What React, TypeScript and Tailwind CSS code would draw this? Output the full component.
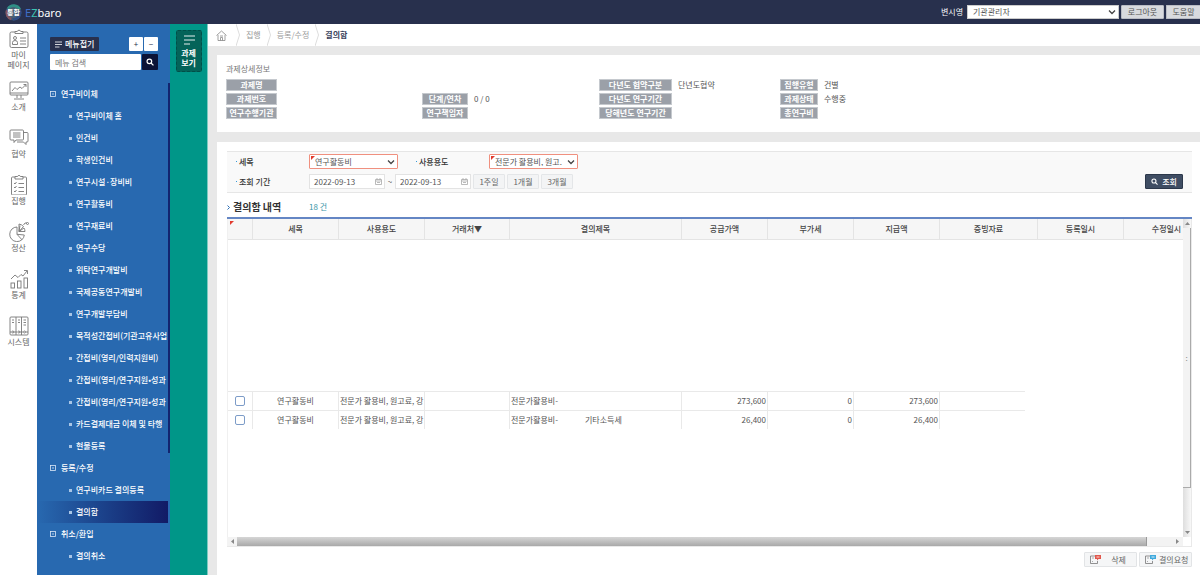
import { useState } from 'react'
import type { ReactNode } from 'react'
import clsx from 'clsx'

interface RailItem {
  lines: string[]
  icon: ReactNode
}

const railItems: RailItem[] = [
  {
    lines: ['마이', '페이지'],
    icon: (
      <>
        <rect x="1" y="3" width="18" height="15.5" rx="1.5" />
        <path d="M6 4.5v-2h2.2a1.9 1.9 0 0 1 3.6 0H14v2z" fill="#fff" />
        <circle cx="6" cy="9" r="1.5" />
        <path d="M3.5 15.5v-2a2.5 2 0 0 1 5 0v2zM11 9h6M11 12h6M11 15h6" />
      </>
    ),
  },
  {
    lines: ['소개'],
    icon: (
      <>
        <rect x="1" y="1" width="18" height="13" rx="1" />
        <path d="M1 12h18M3 10l3-3.500 2 2 3-2.500 2 1.500 4-4M14.500 3.500H17V6M8 14v3M12 14v3M5 18h10" />
      </>
    ),
  },
  {
    lines: ['협약'],
    icon: (
      <>
        <path d="M2 2h11.500a1 1 0 0 1 1 1v8a1 1 0 0 1-1 1H7l-2 2.500V12H2a1 1 0 0 1-1-1V3a1 1 0 0 1 1-1z" />
        <path d="M14.500 4.500H18a1 1 0 0 1 1 1V13a1 1 0 0 1-1 1h-1v2.500L14.500 14H8M4 5h7.500M4 7h7.500M4 9h7.500" />
      </>
    ),
  },
  {
    lines: ['집행'],
    icon: (
      <>
        <rect x="2.500" y="2" width="15" height="18" rx="1" />
        <path d="M6 4V1.500h2.500a1.600 1.600 0 0 1 3 0H14V4z" fill="#fff" />
        <path d="m5 8 1 1 1.500-2M9.500 8.500H15M5 12l1 1 1.500-2M9.500 12.500H15M5 16l1 1 1.500-2M9.500 16.500H15" />
      </>
    ),
  },
  {
    lines: ['정산'],
    icon: (
      <>
        <path d="M8 5a7.300 7.300 0 1 0 7.300 8L8 12.300z" />
        <path d="m8 12.300 5 5.500M10 9.500V2a7.500 7.500 0 0 1 4.500 2.500zM10 9.500 15 6a7 7 0 0 1 1 3.500zM14.500 3 16 1h2M11 3.500l-1 6" />
        <circle cx="18.500" cy="1.500" r="1" />
      </>
    ),
  },
  {
    lines: ['통계'],
    icon: (
      <>
        <rect x="2" y="14" width="3.500" height="5" />
        <rect x="8.500" y="12" width="3.500" height="7" />
        <rect x="15" y="9" width="3.500" height="10" />
        <path d="m2 10 4-4 3 2.500 3-3 2 1.500 4-5M15 1.500h3.500V5" />
      </>
    ),
  },
  {
    lines: ['시스템'],
    icon: (
      <>
        <rect x="1" y="1" width="18" height="18" rx="1" />
        <path d="M7 1v18M12.500 1v18M3 4h2M3 6.500h2M9 4h2M9 6.500h2M14.500 4H17M14.500 6.500H17M14.500 9H17M1 16h1.500M4.500 16H8M10.500 16H14M16.500 16H19" />
        <circle cx="3.800" cy="16" r="1" />
        <circle cx="9.800" cy="16" r="1" />
        <circle cx="15.500" cy="16" r="1" />
      </>
    ),
  },
]

const menuGroups = [
  {
    title: '연구비이체',
    items: [
      '연구비이체 홈',
      '인건비',
      '학생인건비',
      '연구시설·장비비',
      '연구활동비',
      '연구재료비',
      '연구수당',
      '위탁연구개발비',
      '국제공동연구개발비',
      '연구개발부담비',
      '목적성간접비(기관고유사업',
      '간접비(영리/인력지원비)',
      '간접비(영리/연구지원•성과',
      '간접비(영리/연구지원•성과',
      '카드결제대금 이체 및 타행',
      '현물등록',
    ],
  },
  { title: '등록/수정', items: ['연구비카드 결의등록', '결의함'] },
  { title: '취소/환입', items: ['결의취소'] },
]

const details = [
  { width: 'w-[51px]', rows: [['과제명', ''], ['과제번호', ''], ['연구수행기관', '']] },
  { width: 'w-[46px]', rows: [null, ['단계/연차', '0 / 0'], ['연구책임자', '']] },
  { width: 'w-[73px]', rows: [['다년도 협약구분', '단년도협약'], ['다년도 연구기간', ''], ['당해년도 연구기간', '']] },
  { width: 'w-[38px]', rows: [['집행유형', '건별'], ['과제상태', '수행중'], ['총연구비', '']] },
]

const columns = [
  { label: '', width: 'w-[25px]' },
  { label: '세목', width: 'w-[86px]' },
  { label: '사용용도', width: 'w-[86px]' },
  { label: '거래처▼', width: 'w-[85px]' },
  { label: '결의제목', width: 'w-[172px]' },
  { label: '공급가액', width: 'w-[86px]' },
  { label: '부가세', width: 'w-[86px]' },
  { label: '지급액', width: 'w-[86px]' },
  { label: '증빙자료', width: 'w-[98px]' },
  { label: '등록일시', width: 'w-[86px]' },
  { label: '수정일시', width: 'w-[86px]' },
]

const records = [
  { id: 1, category: '연구활동비', usage: '전문가 활용비, 원고료, 강', title: '전문가활용비-', extra: '', supply: '273,600', vat: '0', paid: '273,600' },
  { id: 2, category: '연구활동비', usage: '전문가 활용비, 원고료, 강', title: '전문가활용비-', extra: '기타소득세', supply: '26,400', vat: '0', paid: '26,400' },
]

function RequiredMark() {
  return (
    <svg className="pointer-events-none absolute left-[2px] top-[2px] size-[4px]" viewBox="0 0 4 4" aria-hidden="true">
      <path d="M0 0h4L0 4z" fill="#e23b2e" />
    </svg>
  )
}

function Chevron() {
  return (
    <svg
      className="pointer-events-none absolute right-[3px] top-1/2 size-2 -translate-y-1/2"
      viewBox="0 0 8 8"
      fill="none"
      stroke="#444"
      strokeWidth="1.3"
      aria-hidden="true"
    >
      <path d="M1 2.500 4 5.500 7 2.500" />
    </svg>
  )
}

function SearchIcon({ className }: { className: string }) {
  return (
    <svg className={className} viewBox="0 0 10 10" fill="none" stroke="currentColor" strokeWidth="1.5" aria-hidden="true">
      <circle cx="4.200" cy="4.200" r="2.900" />
      <path d="m6.300 6.300 3 3" />
    </svg>
  )
}

function TopBar() {
  return (
    <header className="flex h-6 shrink-0 items-center justify-between bg-[#28304d] pl-[5px]">
      <a href="#" className="flex items-center gap-[3px]" aria-label="통합 EZbaro">
        <span className="relative flex size-[17px] items-center justify-center">
          <svg className="absolute inset-0 size-full" viewBox="0 0 17 17" aria-hidden="true">
            <circle cx="8.500" cy="8.500" r="8" fill="#3d5670" />
            <path d="M2 4a8 8 0 0 1 14 1L8 8z" fill="#2f8f86" />
            <path d="M1 6a8 8 0 0 0 5 10.200L8 8z" fill="#84565f" />
            <path d="M16 6a8 8 0 0 1-8 10.500L9 8z" fill="#2f4c86" />
            <circle cx="8.500" cy="8.500" r="5.500" fill="#4a6075" />
          </svg>
          <span className="relative text-[7px] font-bold leading-none text-white">통합</span>
        </span>
        <span className="font-['Noto_Sans'] text-[11px] leading-none text-white">
          <span className="text-[#3f6fc8]">E</span>
          <span className="text-[#3cc4b2]">Z</span>baro
        </span>
      </a>
      <div className="flex items-center gap-[2px] text-[#555]">
        <label htmlFor="role" className="mr-[2px] text-white">변시영</label>
        <div className="relative">
          <select id="role" className="h-[14px] w-[152px] appearance-none border border-[#ccc] bg-white pl-[5px] leading-none">
            <option>기관관리자</option>
          </select>
          <Chevron />
        </div>
        <button type="button" className="h-[14px] w-[43px] rounded-[1px] border border-[#b9bcc4] bg-[#d8dade]">로그아웃</button>
        <button type="button" className="h-[14px] w-[34px] rounded-l-[1px] border border-r-0 border-[#b9bcc4] bg-[#d8dade]">도움말</button>
      </div>
    </header>
  )
}

function Rail() {
  return (
    <nav className="w-[37px] shrink-0 bg-white pt-[5px]" aria-label="주 메뉴">
      {railItems.map((item, index) => (
        <a
          key={item.lines.join('')}
          href="#"
          className={clsx('flex flex-col items-center text-center text-[#666]', index === 0 ? 'h-[52px]' : 'h-[47px]')}
        >
          <svg className="size-5" viewBox="0 0 20 20" fill="none" stroke="#777" strokeWidth="0.900" aria-hidden="true">
            {item.icon}
          </svg>
          <span className="mt-px leading-[10px]">
            {item.lines.map((line) => (
              <span key={line} className="block">{line}</span>
            ))}
          </span>
        </a>
      ))}
    </nav>
  )
}

function SideMenu({ active, onSelect }: { active: string; onSelect: (name: string) => void }) {
  return (
    <aside className="w-[133px] shrink-0 bg-[#2869b0] pt-[13px] text-white">
      <div className="flex items-center gap-px pl-[13px] pr-3">
        <button type="button" className="mr-auto flex h-[14px] items-center gap-[3px] rounded-[1px] bg-[#28304d] px-[5px] font-medium">
          <svg className="size-[7px]" viewBox="0 0 7 7" stroke="#fff" strokeWidth="0.800" aria-hidden="true">
            <path d="M0 1h7M0 3.500h7M0 6h4.500" />
          </svg>
          메뉴접기
        </button>
        <button type="button" aria-label="모두 펼치기" className="flex size-[14px] items-center justify-center rounded-[1px] bg-white text-[#28304d]">+</button>
        <button type="button" aria-label="모두 접기" className="flex size-[14px] items-center justify-center rounded-[1px] bg-white text-[#28304d]">−</button>
      </div>
      <form className="mt-[3px] flex gap-px pl-[13px] pr-3" onSubmit={(e) => e.preventDefault()}>
        <input
          type="text"
          aria-label="메뉴 검색"
          placeholder="메뉴 검색"
          className="h-4 min-w-0 flex-1 rounded-[1px] bg-white pl-[5px] text-[#333] placeholder:text-[#777]"
        />
        <button type="submit" aria-label="검색" className="flex size-4 items-center justify-center rounded-[1px] bg-[#0b1236]">
          <SearchIcon className="size-2" />
        </button>
      </form>
      <div className="relative mt-[13px] pr-[2px]">
        <div className="absolute right-0 top-0 h-[370px] w-[2px] bg-[#13246f]" />
        {menuGroups.map((group) => (
          <section key={group.title}>
            <h2 className="flex h-[22px] items-center gap-[5px] pl-[13px] font-medium">
              <svg className="size-[6px]" viewBox="0 0 6 6" fill="none" stroke="#dbe8f7" strokeWidth="0.800" aria-hidden="true">
                <rect x="0.500" y="0.500" width="5" height="5" />
                <path d="M2 3h2" />
              </svg>
              {group.title}
            </h2>
            <ul>
              {group.items.map((name, index) => (
                <li key={index}>
                  <a
                    href="#"
                    onClick={() => onSelect(name)}
                    className={clsx(
                      'flex h-[22px] items-center gap-1 overflow-hidden whitespace-nowrap pl-8 font-medium',
                      name === active && 'bg-gradient-to-r from-[#2869b0] to-[#121a66]',
                    )}
                  >
                    <span className="size-[3px] shrink-0 bg-[#a9c6e6]" />
                    {name}
                  </a>
                </li>
              ))}
            </ul>
          </section>
        ))}
      </div>
    </aside>
  )
}

function TaskStrip() {
  return (
    <div className="w-[38px] shrink-0 border-r border-[#7cc9c1] bg-[#009688] pt-[6px]">
      <button
        type="button"
        className="mx-auto flex h-[42px] w-[26px] flex-col items-center rounded-[2px] border border-dashed border-[#004f48] bg-[#046359] pt-1 font-bold leading-[10px] text-white"
      >
        <svg className="mb-[3px] h-[10px] w-3" viewBox="0 0 12 10" stroke="#fff" strokeWidth="0.900" aria-hidden="true">
          <path d="M1 1h11M1 5h11M1 9h6" />
        </svg>
        <span>과제<br />보기</span>
      </button>
    </div>
  )
}

function CrumbDivider() {
  return (
    <svg className="h-[22px] w-1" viewBox="0 0 4 22" fill="none" stroke="#ddd" aria-hidden="true">
      <path d="M0 0 3.500 11 0 22" />
    </svg>
  )
}

function Breadcrumb() {
  return (
    <nav className="flex h-[22px] items-center gap-[6px] bg-white pl-2 text-[#999]" aria-label="현재 위치">
      <a href="#" aria-label="홈" className="mr-[3px]">
        <svg className="size-[11px]" viewBox="0 0 11 11" fill="none" stroke="#888" strokeWidth="0.800" aria-hidden="true">
          <path d="M.5 5.500 5.500 1l5 4.500M2 5v5.500h7V5M4.500 10.500v-3h2v3M4 6h3" />
        </svg>
      </a>
      <CrumbDivider />
      <a href="#">집행</a>
      <CrumbDivider />
      <a href="#">등록/수정</a>
      <CrumbDivider />
      <span className="font-bold text-[#39415a]">결의함</span>
    </nav>
  )
}

function TaskDetail() {
  return (
    <section className="bg-white px-[9px] pb-[13px] pt-2">
      <h2 className="leading-3 text-[#777]">과제상세정보</h2>
      <div className="mt-1 grid grid-cols-[196fr_177fr_181fr_411fr]">
        {details.map((col, i) => (
          <dl key={i} className="flex flex-col gap-[2px]">
            {col.rows.map((row, j) => (
              <div key={j} className="flex h-3 items-center gap-[6px]">
                {row && (
                  <>
                    <dt className={clsx('h-3 border border-[#c5c9ce] bg-[#9ba0a8] text-center font-bold leading-[10px] text-white', col.width)}>
                      {row[0]}
                    </dt>
                    <dd>{row[1]}</dd>
                  </>
                )}
              </div>
            ))}
          </dl>
        ))}
      </div>
    </section>
  )
}

function FieldLabel({ htmlFor, children }: { htmlFor: string; children: ReactNode }) {
  return (
    <label htmlFor={htmlFor} className="flex w-[73px] items-center gap-[2px] font-medium text-[#333]">
      <span className="size-px bg-[#3a9bd6]" />
      {children}
    </label>
  )
}

function RequiredSelect({ id, value }: { id: string; value: string }) {
  return (
    <div className="relative">
      <select id={id} className="h-[15px] w-[89px] appearance-none rounded-[1px] border border-[#f0907f] bg-white pl-[5px] leading-none">
        <option>{value}</option>
      </select>
      <RequiredMark />
      <Chevron />
    </div>
  )
}

function DateField({ id, label }: { id: string; label?: string }) {
  return (
    <div className="relative">
      <input
        id={id}
        type="text"
        aria-label={label}
        defaultValue="2022-09-13"
        className="block h-[15px] w-[76px] border border-[#e3e3e3] bg-white pl-1"
      />
      <svg className="absolute right-[3px] top-1 size-[7px]" viewBox="0 0 7 7" fill="none" stroke="#aaa" strokeWidth="0.800" aria-hidden="true">
        <path d="M.5 1.500h6v5h-6zM.5 3h6M2 0v2M5 0v2M2 4.500h3" />
      </svg>
    </div>
  )
}

function SearchForm() {
  return (
    <form
      className="flex h-[42px] items-end justify-between border-y border-[#e6e6e6] bg-[#f9f9f9] px-[9px] pb-[3px]"
      onSubmit={(e) => e.preventDefault()}
    >
      <div className="flex flex-col gap-[5px]">
        <div className="flex items-center">
          <FieldLabel htmlFor="category">세목</FieldLabel>
          <RequiredSelect id="category" value="연구활동비" />
          <span className="w-[18px]" />
          <FieldLabel htmlFor="usage">사용용도</FieldLabel>
          <RequiredSelect id="usage" value="전문가 활용비, 원고." />
        </div>
        <div className="flex items-center">
          <FieldLabel htmlFor="from">조회 기간</FieldLabel>
          <DateField id="from" />
          <span className="w-[10px] text-center">~</span>
          <DateField id="to" label="조회 종료일" />
          <div className="ml-[2px] flex gap-[2px]">
            {['1주일', '1개월', '3개월'].map((label) => (
              <button key={label} type="button" className="h-[15px] w-8 rounded-[1px] border border-[#e4e6e8] bg-[#f3f4f5] text-[#666]">
                {label}
              </button>
            ))}
          </div>
        </div>
      </div>
      <button type="submit" className="flex h-[15px] w-[38px] items-center justify-center gap-1 rounded-[1px] border border-[#2c384b] bg-[#3f4d63] font-medium text-white">
        <SearchIcon className="size-[7px]" />
        조회
      </button>
    </form>
  )
}

function RecordTable() {
  const cell = 'h-[19px] border-r border-t border-[#e9e9e9] p-0'

  return (
    <table className="w-full min-w-[982px] table-fixed border-separate border-spacing-0">
      <thead>
        <tr>
          {columns.map((column, index) => (
            <th key={index} scope="col" className={clsx('relative h-[21px] border-b border-r border-[#e4e4e4] bg-[#f6f6f6] p-0 font-medium text-[#444]', column.width)}>
              {column.label || <RequiredMark />}
            </th>
          ))}
        </tr>
      </thead>
      <tbody>
        <tr>
          <td colSpan={11} className="h-[151px] p-0" />
        </tr>
        {records.map((record) => (
          <tr key={record.id}>
            <td className={cell}>
              <input
                type="checkbox"
                aria-label={`${record.category} ${record.paid} 선택`}
                className="mx-auto block size-[10px] appearance-none rounded-[2px] border border-[#7d9cc8] bg-white checked:bg-[#7d9cc8]"
              />
            </td>
            <td className={clsx(cell, 'text-center')}>{record.category}</td>
            <td className={clsx(cell, 'overflow-hidden whitespace-nowrap pl-px')}>{record.usage}</td>
            <td className={cell} />
            <td className={clsx(cell, 'whitespace-nowrap pl-px')}>
              {record.title}
              {record.extra && <span className="ml-[27px]">{record.extra}</span>}
            </td>
            <td className={clsx(cell, 'pr-px text-right')}>{record.supply}</td>
            <td className={clsx(cell, 'pr-px text-right')}>{record.vat}</td>
            <td className={clsx(cell, 'pr-px text-right')}>{record.paid}</td>
            <td className="h-[19px] p-0">
              <div className="h-[19px] w-[85px] border-t border-[#e9e9e9]" />
            </td>
            <td className="p-0" colSpan={2} />
          </tr>
        ))}
      </tbody>
    </table>
  )
}

function Arrow({ d }: { d: string }) {
  return (
    <svg className="size-[5px] shrink-0" viewBox="0 0 5 5" fill="#888" aria-hidden="true">
      <path d={d} />
    </svg>
  )
}

function RecordGrid() {
  return (
    <div className="flex flex-1 flex-col border-t-2 border-[#6486c4]">
      <div className="flex flex-1 border-l border-[#f0f0f0]">
        <div className="min-w-0 flex-1 overflow-hidden">
          <RecordTable />
        </div>
        <div className="flex w-[9px] shrink-0 flex-col items-center border-r border-[#e9e9e9] bg-gradient-to-r from-[#dedede] to-[#f8f8f8]">
          <div className="flex h-[9px] items-center"><Arrow d="M0 4h5L2.500 1z" /></div>
          <div className="flex h-[260px] w-full items-center justify-center border-b border-r border-[#aaa] bg-[#f3f3f3] text-[#888]">:</div>
          <div className="mt-auto flex h-[9px] items-center"><Arrow d="M0 1h5L2.500 4z" /></div>
        </div>
      </div>
      <div className="flex h-[10px] items-center border-b border-[#e9e9e9] bg-[#f3f3f3]">
        <div className="flex w-[10px] justify-center"><Arrow d="M4 0v5L1 2.500z" /></div>
        <div className="h-[9px] flex-1 border-r border-[#999] bg-gradient-to-b from-[#d6d6d6] to-[#a9a9a9]" />
        <div className="flex w-[36px] justify-end pr-[3px]"><Arrow d="M1 0v5l3-2.500z" /></div>
        <div className="h-[9px] w-[9px] border-r border-[#e9e9e9] bg-white" />
      </div>
    </div>
  )
}

function DocIcon({ color }: { color: string }) {
  return (
    <svg className="h-[9px] w-[11px] shrink-0" viewBox="0 0 11 9" fill="none" aria-hidden="true">
      <path d="M5 1H.5v7.500h7V6" stroke="#777" strokeWidth="0.800" />
      <path d="M2 3h2M2 6.500h1" stroke="#999" strokeWidth="0.800" />
      <path d="M5 0h6v4H8.500L7 5.500V4H5z" fill={color} />
      <path d="M6.500 2h3" stroke="#fff" strokeWidth="0.800" />
    </svg>
  )
}

export default function App() {
  const [active, setActive] = useState('결의함')

  return (
    <div className="flex min-h-screen flex-col bg-white font-['Noto_Sans_CJK_KR',sans-serif] text-[8px] leading-3 text-[#555]">
      <TopBar />
      <div className="flex flex-1">
        <Rail />
        <SideMenu active={active} onSelect={setActive} />
        <TaskStrip />
        <div className="flex min-w-0 flex-1 flex-col bg-[#e8e8e8]">
          <Breadcrumb />
          <main className="flex flex-1 flex-col gap-[10px] pl-[9px] pt-[9px]">
            <TaskDetail />
            <section className="flex flex-1 flex-col bg-white pb-2 pl-[10px] pr-2 pt-[9px]">
              <SearchForm />
              <div className="flex h-6 items-center pt-1">
                <h2 className="flex w-[82px] items-center gap-[3px] text-[10px] font-bold text-[#333]">
                  <svg className="h-[5px] w-[3px]" viewBox="0 0 3 5" fill="none" stroke="#2a6db5" aria-hidden="true">
                    <path d="M.5.500 2.500 2.500.5 4.500" />
                  </svg>
                  결의함 내역
                </h2>
                <span className="text-[#3c96a8]">18 건</span>
              </div>
              <RecordGrid />
              <div className="mt-[5px] flex justify-end gap-[2px] text-[#666]">
                <button type="button" className="flex h-[15px] w-[53px] items-center rounded-[1px] border border-[#e2e4e6] bg-[#f5f6f7] pl-[5px]">
                  <DocIcon color="#e2574c" />
                  <span className="flex-1">삭제</span>
                </button>
                <button type="button" className="flex h-[15px] w-[53px] items-center gap-[3px] whitespace-nowrap rounded-[1px] border border-[#e2e4e6] bg-[#f5f6f7] pl-[5px]">
                  <DocIcon color="#3fa9dc" />
                  결의요청
                </button>
              </div>
            </section>
          </main>
        </div>
      </div>
    </div>
  )
}
